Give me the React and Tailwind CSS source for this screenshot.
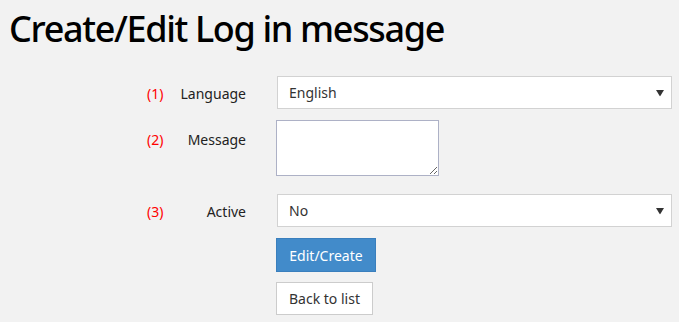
import React from "react";

function Arrow() {
  return (
    <svg width="8" height="7" viewBox="0 0 8 7" className="absolute right-[7px] top-1/2 -translate-y-1/2 pointer-events-none">
      <path d="M0 0.5 H8 L4 7 Z" fill="#333" />
    </svg>
  );
}

function Select({ value }) {
  return (
    <div className="relative w-[395px] h-[33px] bg-white border border-[#d2d2d2] flex items-center pl-[11px] text-[14px] text-[#333]">
      <span>{value}</span>
      <Arrow />
    </div>
  );
}

function Row({ num, label, children, labelPad = "pt-[8px]", className = "" }) {
  return (
    <div className={"flex items-start " + className}>
      <div className={"w-[246px] pl-[147px] flex justify-between text-[14px] leading-[20px] " + labelPad}>
        <span className="text-[#ff0000]">{num}</span>
        <span className="text-[#222]">{label}</span>
      </div>
      <div className="ml-[31px]">{children}</div>
    </div>
  );
}

export default function App() {
  return (
    <div
      className="w-[679px] h-[322px] bg-[#f2f2f2] overflow-hidden"
      style={{ fontFamily: '"Noto Sans", "Open Sans", sans-serif' }}
    >
      <h1 className="pl-[9px] pt-[7px] text-[36px] leading-[44px] font-medium tracking-[-1.35px] text-black">Create/Edit Log in message</h1>
      <div className="mt-[25px] flex flex-col">
        <Row num="(1)" label="Language">
          <Select value="English" />
        </Row>
        <Row num="(2)" label="Message" labelPad="pt-[10px]" className="mt-[11px]">
          <textarea className="-ml-px block w-[163px] h-[56px] bg-white border border-[#adb1c6] resize-y outline-none" />
        </Row>
        <Row num="(3)" label="Active" className="mt-[18px]">
          <Select value="No" />
        </Row>
        <div className="ml-[276px] mt-[11px] flex flex-col items-start gap-[10px]">
          <button className="h-[34px] w-[100px] bg-[#428bca] border border-[#3a7fbd] text-white text-[14px]">Edit/Create</button>
          <button className="h-[33px] w-[97px] bg-white border border-[#cccccc] text-[#333] text-[14px]">Back to list</button>
        </div>
      </div>
    </div>
  );
}
